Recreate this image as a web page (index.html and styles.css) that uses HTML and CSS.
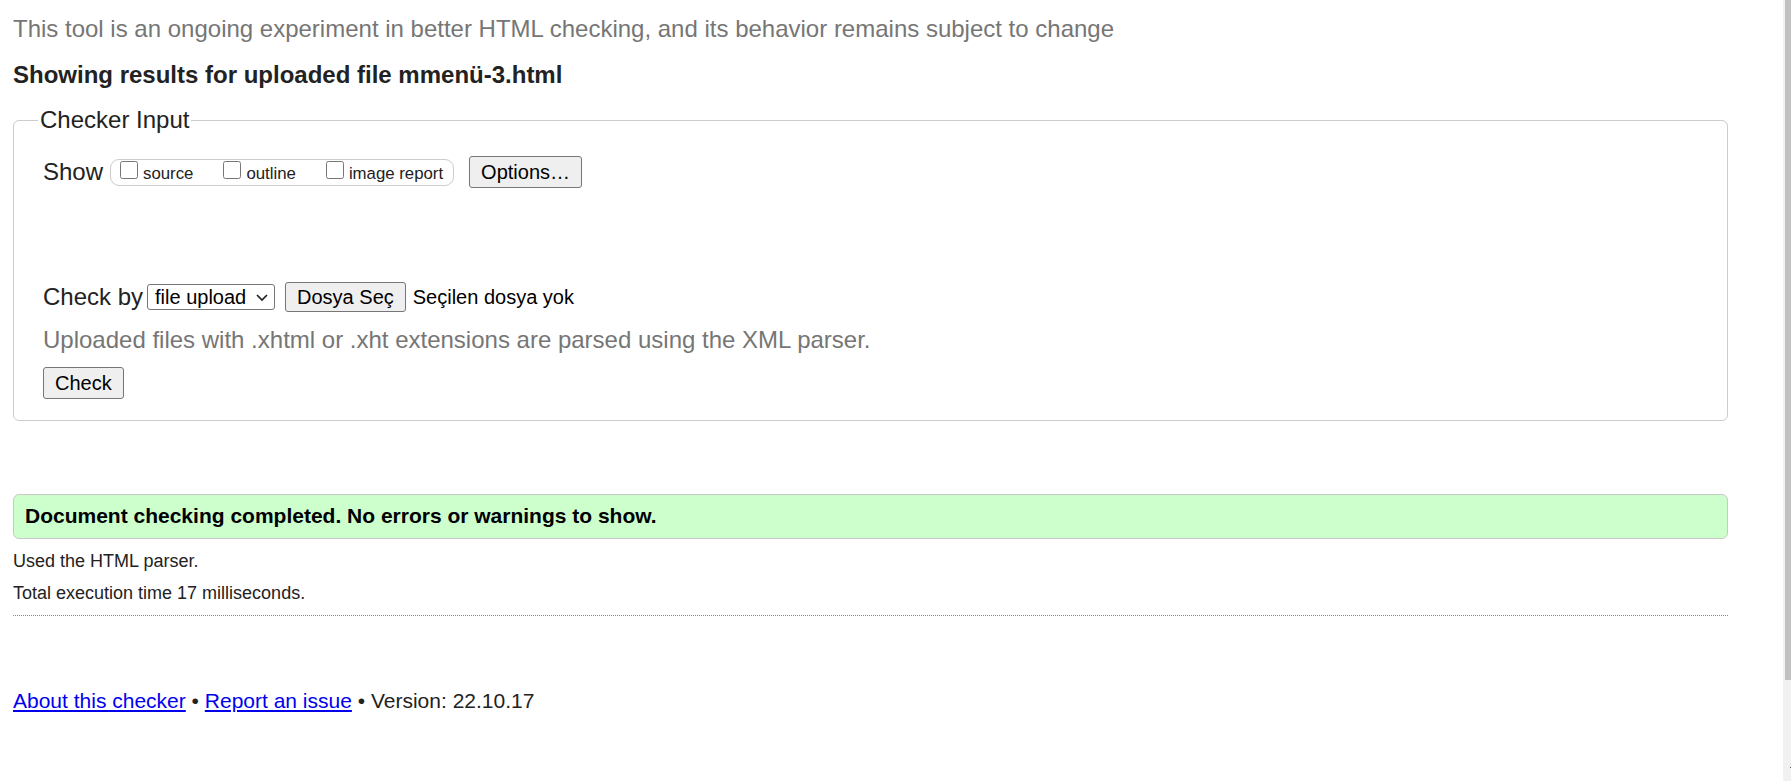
FILE: index.html
```html
<!DOCTYPE html>
<html lang="tr">
<head>
<meta charset="utf-8">
<title>Nu Html Checker</title>
<link rel="stylesheet" href="styles.css">
</head>
<body>
<main class="page">
  <p class="intro">This tool is an ongoing experiment in better HTML checking, and its behavior remains subject to change</p>
  <p class="result-heading">Showing results for uploaded file mmenü-3.html</p>
  <form class="checker-form">
    <fieldset class="checker">
      <legend class="checker-legend">Checker Input</legend>
      <div class="checker-body">
        <div class="show-row">
          <span class="show-label">Show</span>
          <div class="show-options">
            <label class="opt"><input type="checkbox"><span>source</span></label>
            <label class="opt"><input type="checkbox"><span>outline</span></label>
            <label class="opt"><input type="checkbox"><span>image report</span></label>
          </div>
          <button type="button" class="btn btn-options">Options…</button>
        </div>
        <div class="checkby-row">
          <span class="checkby-label">Check by</span>
          <span class="select">file upload<svg class="chevron" width="14" height="9" viewBox="0 0 14 9"><path d="M2 2 L7 7 L12 2" fill="none" stroke="#222" stroke-width="1.7"/></svg></span>
          <button type="button" class="btn btn-file">Dosya Seç</button>
          <span class="file-status">Seçilen dosya yok</span>
        </div>
        <p class="instruction">Uploaded files with .xhtml or .xht extensions are parsed using the XML parser.</p>
        <div class="submit-row"><button type="button" class="btn btn-check">Check</button></div>
      </div>
    </fieldset>
  </form>
  <p class="success">Document checking completed. No errors or warnings to show.</p>
  <p class="stats stats-first">Used the HTML parser.</p>
  <p class="stats">Total execution time 17 milliseconds.</p>
  <hr class="divider">
  <p class="footer"><a href="#">About this checker</a> • <a href="#">Report an issue</a> • Version: 22.10.17</p>
</main>
<div class="scrollbar"><div class="scrollbar-thumb"></div><div class="scrollbar-arrow"></div></div>
</body>
</html>
```

FILE: styles.css
```css
html {
  overflow: hidden;
  background: #fff;
}
body {
  margin: 0;
  padding: 0 13px;
  font-family: "Liberation Sans", Arial, sans-serif;
  color: #222;
  background: #fff;
}
.page {
  width: 1715px;
}
.intro {
  margin: 15px 0 0;
  font-size: 24px;
  line-height: 28px;
  color: #767676;
}
.result-heading {
  margin: 18px 0 0;
  font-size: 24px;
  line-height: 28px;
  font-weight: bold;
}
.checker-form {
  margin: 17px 0 0;
}
.checker {
  margin: 0;
  padding: 0;
  border: 1px solid #ccc;
  border-radius: 6px;
  min-width: 0;
}
.checker-legend {
  margin-left: 24px;
  padding: 0 2px;
  font-size: 24px;
  line-height: 28px;
}
.checker-body {
  padding: 0 0 21px 29px;
}
.show-row {
  display: flex;
  align-items: center;
  height: 32px;
  margin-top: 22px;
}
.show-label {
  font-size: 24px;
  line-height: 28px;
  margin-right: 7px;
}
.show-options {
  display: flex;
  align-items: center;
  gap: 30px;
  height: 27px;
  box-sizing: border-box;
  border: 1px solid #ccc;
  border-radius: 9px;
  padding: 0 10px 0 9px;
  margin-right: 15px;
}
.opt {
  display: flex;
  align-items: baseline;
  font-size: 16.8px;
  line-height: 19px;
  color: #222;
}
.opt input {
  width: 18px;
  height: 18px;
  margin: 0 5px 0 0;
}
.btn {
  font-family: "Liberation Sans", Arial, sans-serif;
  font-size: 20px;
  line-height: 23px;
  color: #000;
  background: #efefef;
  border: 1px solid #767676;
  border-radius: 3px;
  padding: 0 11px;
  box-sizing: border-box;
}
.btn-options {
  height: 32px;
}
.checkby-row {
  display: flex;
  align-items: center;
  height: 30px;
  margin-top: 94px;
}
.checkby-label {
  font-size: 24px;
  line-height: 28px;
  margin-right: 4px;
}
.select {
  display: flex;
  align-items: center;
  justify-content: space-between;
  width: 128px;
  height: 26px;
  box-sizing: border-box;
  border: 1px solid #767676;
  border-radius: 3px;
  padding: 0 5px 0 7px;
  font-size: 20px;
  color: #000;
  background: #fff;
  margin-right: 10px;
}
.chevron {
  display: block;
}
.btn-file {
  height: 30px;
  margin-right: 7px;
}
.file-status {
  font-size: 20px;
  line-height: 23px;
  color: #000;
}
.instruction {
  margin: 14px 0 0;
  font-size: 24px;
  line-height: 28px;
  color: #767676;
}
.submit-row {
  margin-top: 13px;
  display: flex;
}
.btn-check {
  height: 32px;
}
.success {
  margin: 73px 0 0;
  padding: 9px 11px 10px;
  border: 1px solid #c8c8c8;
  border-radius: 6px;
  background: #cfc;
  font-size: 21px;
  line-height: 24px;
  font-weight: bold;
  color: #000;
}
.stats {
  margin: 11px 0 0;
  font-size: 18px;
  line-height: 21px;
}
.stats-first {
  margin-top: 12px;
}
.divider {
  margin: 11px 0 0;
  height: 0;
  border: 0;
  border-top: 1px dotted #888;
}
.footer {
  margin: 73px 0 0;
  font-size: 21px;
  line-height: 24px;
}
.footer a {
  color: #00e;
}
.scrollbar {
  position: fixed;
  top: 0;
  right: 0;
  width: 8px;
  height: 100vh;
  background: #f1f1f1;
}
.scrollbar-thumb {
  margin-left: 2px;
  height: 680px;
  background: #c1c1c1;
}
.scrollbar-arrow {
  margin: 87px 0 0 7px;
  width: 1px;
  height: 1px;
  background: #505050;
}
```
